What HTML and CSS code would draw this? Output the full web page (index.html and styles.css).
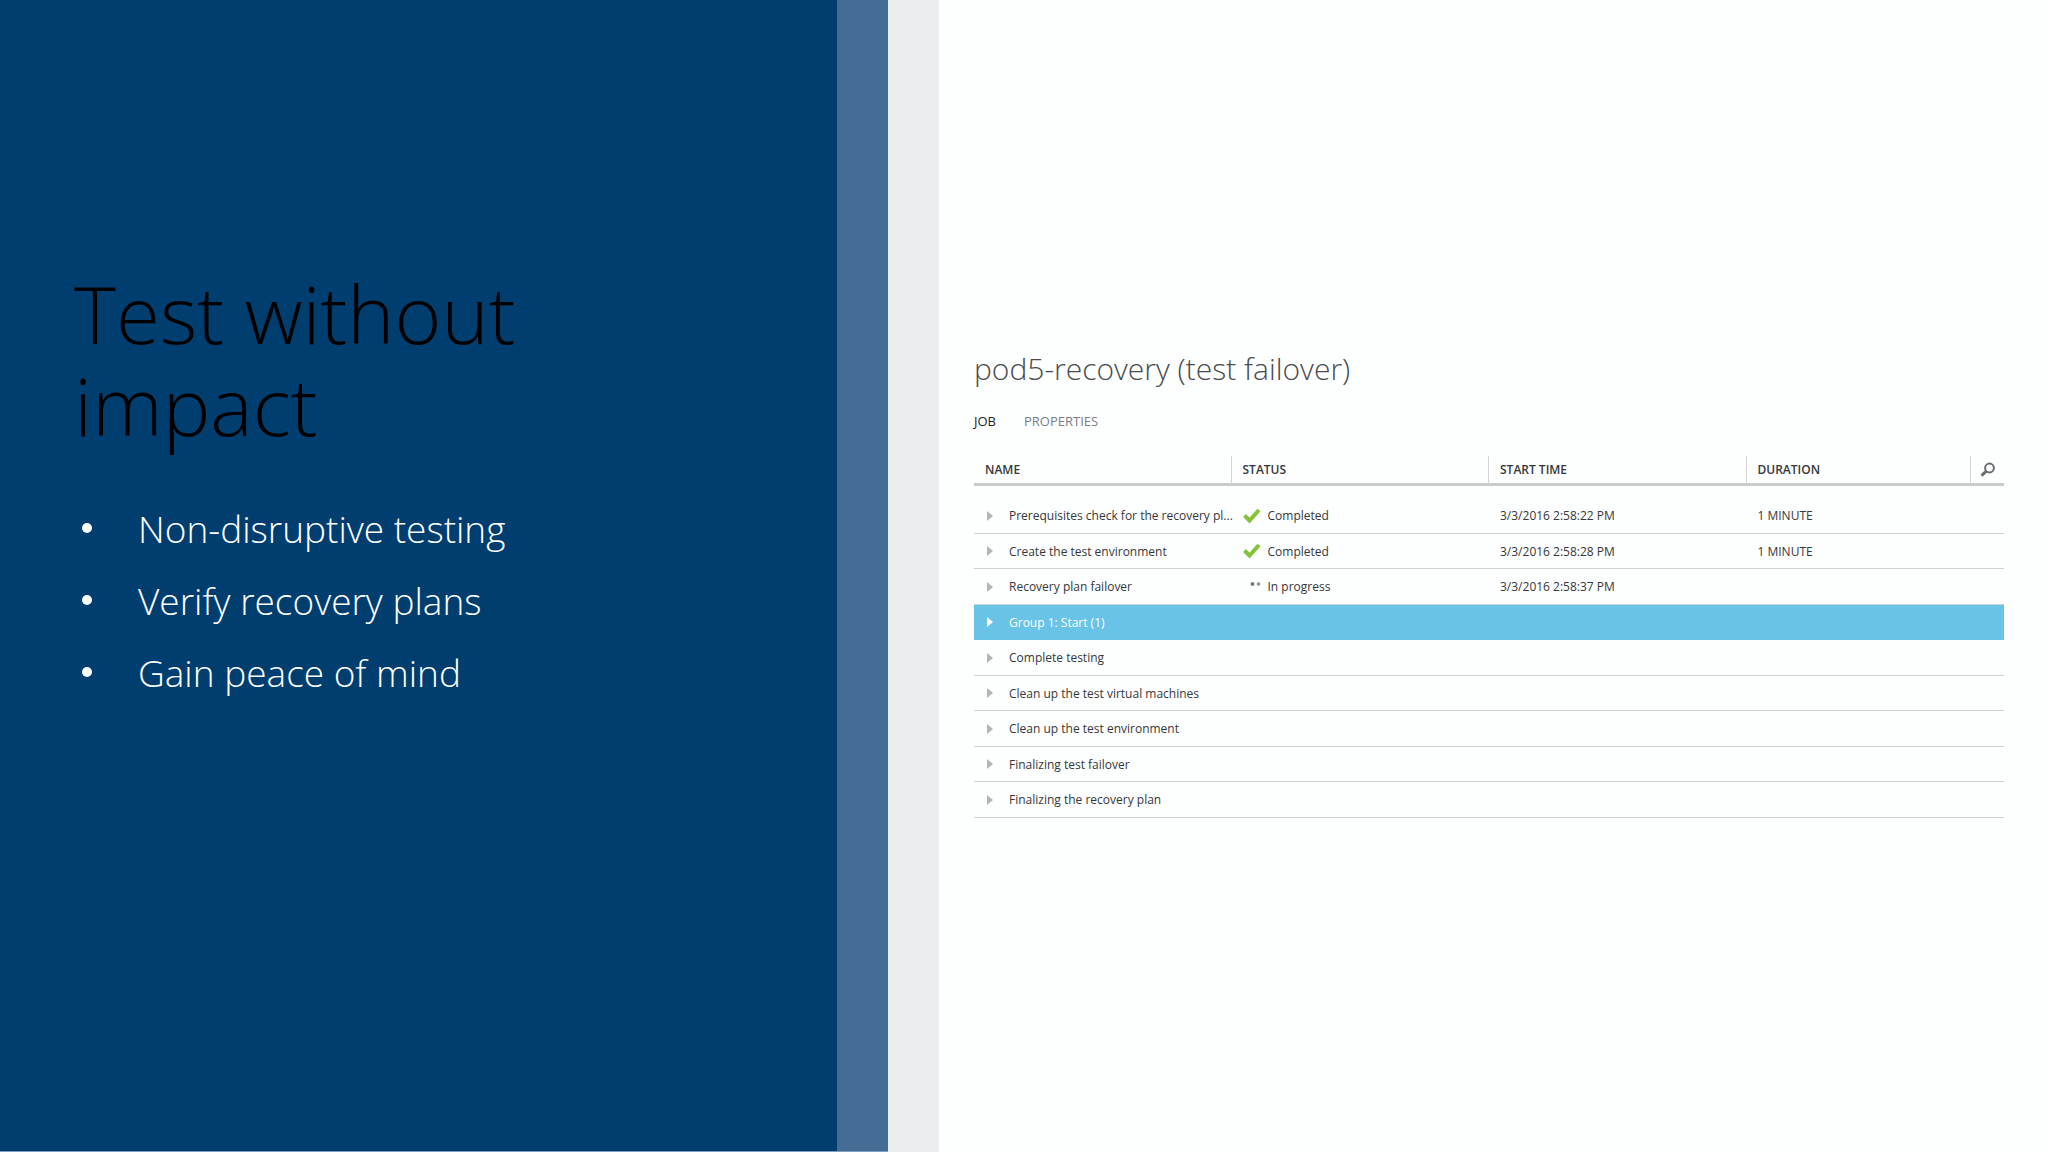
FILE: index.html
```html
<!DOCTYPE html>
<html lang="en">
<head>
    <meta charset="utf-8">
    <title>Test without impact</title>
    <link rel="stylesheet" href="styles.css">
</head>
<body>
    <svg class="symbols" aria-hidden="true">
        <symbol id="arrow" viewBox="0 0 6 10"><path d="M0 0L6 5L0 10Z"/></symbol>
        <symbol id="check" viewBox="0 0 18 16"><path d="M1.5 7.5L6.5 12.5L16 2" fill="none" stroke="#84c335" stroke-width="4"/></symbol>
        <symbol id="progress" viewBox="0 0 18 16"><circle cx="9.5" cy="5" r="2" fill="#77787b"/><circle cx="15.5" cy="5" r="1.8" fill="#8e8f92"/></symbol>
    </svg>
    <div class="slide">
        <section class="intro">
            <h1>Test without impact</h1>
            <ul>
                <li>Non-disruptive testing</li>
                <li>Verify recovery plans</li>
                <li>Gain peace of mind</li>
            </ul>
        </section>
        <div class="band band-blue"></div>
        <div class="band band-gray"></div>
        <main class="portal">
            <h2>pod5-recovery (test failover)</h2>
            <nav class="tabs">
                <a class="tab active" href="#job">JOB</a>
                <a class="tab" href="#properties">PROPERTIES</a>
            </nav>
            <table class="jobs" id="job">
                <colgroup>
                    <col class="col-main">
                    <col class="col-main">
                    <col class="col-main">
                    <col>
                    <col class="col-search">
                </colgroup>
                <thead>
                    <tr>
                        <th>NAME</th>
                        <th>STATUS</th>
                        <th>START TIME</th>
                        <th>DURATION</th>
                        <th class="search-cell">
                            <button class="search" aria-label="Search">
                                <svg viewBox="0 0 16 16"><circle cx="9.5" cy="6" r="4.4" fill="none" stroke="#6b6c70" stroke-width="2"/><path d="M6.3 9.2L1.5 13.6" stroke="#6b6c70" stroke-width="3"/></svg>
                            </button>
                        </th>
                    </tr>
                </thead>
                <tbody>
                    <tr class="spacer"><td colspan="5"></td></tr>
                    <tr>
                        <td><div class="cell"><svg class="arrow"><use href="#arrow"/></svg><span>Prerequisites check for the recovery pl...</span></div></td>
                        <td><div class="cell status"><svg class="icon"><use href="#check"/></svg><span>Completed</span></div></td>
                        <td>3/3/2016 2:58:22 PM</td>
                        <td>1 MINUTE</td>
                        <td></td>
                    </tr>
                    <tr>
                        <td><div class="cell"><svg class="arrow"><use href="#arrow"/></svg><span>Create the test environment</span></div></td>
                        <td><div class="cell status"><svg class="icon"><use href="#check"/></svg><span>Completed</span></div></td>
                        <td>3/3/2016 2:58:28 PM</td>
                        <td>1 MINUTE</td>
                        <td></td>
                    </tr>
                    <tr>
                        <td><div class="cell"><svg class="arrow"><use href="#arrow"/></svg><span>Recovery plan failover</span></div></td>
                        <td><div class="cell status"><svg class="icon"><use href="#progress"/></svg><span>In progress</span></div></td>
                        <td>3/3/2016 2:58:37 PM</td>
                        <td></td>
                        <td></td>
                    </tr>
                    <tr class="selected">
                        <td><div class="cell"><svg class="arrow"><use href="#arrow"/></svg><span>Group 1: Start (1)</span></div></td>
                        <td></td><td></td><td></td><td></td>
                    </tr>
                    <tr>
                        <td><div class="cell"><svg class="arrow"><use href="#arrow"/></svg><span>Complete testing</span></div></td>
                        <td></td><td></td><td></td><td></td>
                    </tr>
                    <tr>
                        <td><div class="cell"><svg class="arrow"><use href="#arrow"/></svg><span>Clean up the test virtual machines</span></div></td>
                        <td></td><td></td><td></td><td></td>
                    </tr>
                    <tr>
                        <td><div class="cell"><svg class="arrow"><use href="#arrow"/></svg><span>Clean up the test environment</span></div></td>
                        <td></td><td></td><td></td><td></td>
                    </tr>
                    <tr>
                        <td><div class="cell"><svg class="arrow"><use href="#arrow"/></svg><span>Finalizing test failover</span></div></td>
                        <td></td><td></td><td></td><td></td>
                    </tr>
                    <tr>
                        <td><div class="cell"><svg class="arrow"><use href="#arrow"/></svg><span>Finalizing the recovery plan</span></div></td>
                        <td></td><td></td><td></td><td></td>
                    </tr>
                </tbody>
            </table>
        </main>
    </div>
</body>
</html>
```
FILE: styles.css
```css
* {
    box-sizing: border-box;
}
body {
    margin: 0;
    font-family: 'Open Sans', 'Noto Sans', sans-serif;
    background-color: #fdfefe;
}
.symbols {
    display: none;
}
.slide {
    display: grid;
    grid-template-columns: 837fr 51fr 51fr 1109fr;
    min-height: 100vh;
}
.intro {
    padding: 267px 74px 0;
    background-color: #003e70;
    color: #fff;
}
.intro,
.band-blue {
    border-bottom: 1px solid #7f9fc4;
}
.band-blue {
    background-color: #446c94;
}
.band-gray {
    background-color: #ecedef;
}
h1 {
    max-width: 560px;
    margin: 0;
    font-size: 80px;
    font-weight: 300;
    line-height: 92px;
    color: #000;
}
ul {
    margin: 41px 0 0;
    padding: 0;
    list-style: none;
}
li {
    display: flex;
    align-items: center;
    height: 72px;
    padding-left: 8px;
    font-size: 37px;
    font-weight: 300;
}
li::before {
    content: '';
    width: 10px;
    height: 10px;
    margin-right: 46px;
    border-radius: 50%;
    background-color: #fff;
}
.portal {
    padding: 345px 44px 0 35px;
    color: #36373a;
}
h2 {
    margin: 0;
    font-size: 30px;
    font-weight: 300;
    line-height: 48px;
    color: #4a4b4f;
}
.tabs {
    display: flex;
    gap: 28px;
    margin-top: 16px;
    font-size: 13px;
    line-height: 24px;
}
.tab {
    color: #7c7d81;
    text-decoration: none;
}
.tab.active {
    color: #222;
}
.jobs {
    width: 100%;
    margin-top: 23px;
    border-collapse: separate;
    border-spacing: 0;
    table-layout: fixed;
    font-size: 12px;
}
.col-main {
    width: 25%;
}
.col-search {
    width: 33px;
}
th {
    height: 30px;
    padding: 0 11px;
    border-bottom: 3px solid #c8cacc;
    border-right: 1px solid #d3d4d6;
    font-size: 12px;
    font-weight: 600;
    text-align: left;
}
th.search-cell {
    padding: 0;
    border-right: none;
    text-align: center;
}
.search {
    display: block;
    margin: 0 auto;
    padding: 0;
    border: none;
    background: none;
    cursor: pointer;
}
.search svg {
    display: block;
    width: 16px;
    height: 16px;
}
td {
    height: 35px;
    padding: 0 0 0 11px;
    border-bottom: 1px solid #cdcfd2;
    white-space: nowrap;
}
tr:nth-child(even) td {
    height: 36px;
}
tr.spacer td {
    height: 12px;
    border: none;
}
.cell {
    display: flex;
    align-items: center;
    gap: 16px;
}
.arrow {
    flex: none;
    width: 6px;
    height: 10px;
    margin-left: 2px;
    fill: #b4b5b8;
}
.status {
    gap: 7px;
}
.icon {
    flex: none;
    width: 18px;
    height: 16px;
}
.selected td {
    background-color: #69c3e7;
    border-color: #69c3e7;
    color: #fff;
}
.selected .arrow {
    fill: #fff;
}
```
